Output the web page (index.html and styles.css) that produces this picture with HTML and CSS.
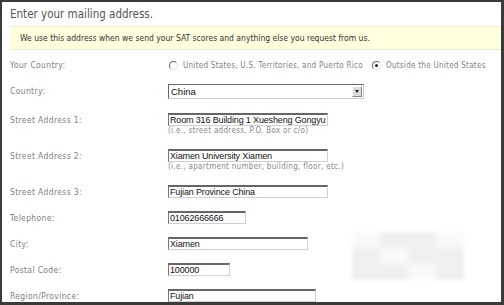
FILE: index.html
```html
<!DOCTYPE html>
<html>

<head>
    <title>Mailing Address</title>
    <link rel="stylesheet" href="styles.css">
</head>

<body>
    <div class="panel">
        <div class="title">Enter your mailing address.</div>
        <div class="notice">We use this address when we send your SAT scores and anything else you request from us.</div>

        <div class="form">
            <div class="row row-radio">
                <div class="label">Your Country:</div>
                <div class="field radios">
                    <span class="radio"></span>
                    <span class="radio-text">United States, U.S. Territories, and Puerto Rico</span>
                    <span class="radio checked"></span>
                    <span class="radio-text">Outside the United States</span>
                </div>
            </div>
            <div class="row row-select">
                <div class="label">Country:</div>
                <div class="field">
                    <div class="select">
                        <span class="select-value">China</span>
                        <span class="select-btn"></span>
                    </div>
                </div>
            </div>
            <div class="row">
                <div class="label">Street Address 1:</div>
                <div class="field">
                    <div class="input w160">Room 316 Building 1 Xuesheng Gongyu</div>
                    <div class="hint">(i.e., street address, P.O. Box or c/o)</div>
                </div>
            </div>
            <div class="row">
                <div class="label">Street Address 2:</div>
                <div class="field">
                    <div class="input w160">Xiamen University Xiamen</div>
                    <div class="hint">(i.e., apartment number, building, floor, etc.)</div>
                </div>
            </div>
            <div class="row">
                <div class="label">Street Address 3:</div>
                <div class="field">
                    <div class="input w160">Fujian Province China</div>
                </div>
            </div>
            <div class="row">
                <div class="label">Telephone:</div>
                <div class="field">
                    <div class="input w78">01062666666</div>
                </div>
            </div>
            <div class="row">
                <div class="label">City:</div>
                <div class="field">
                    <div class="input w140">Xiamen</div>
                </div>
            </div>
            <div class="row">
                <div class="label">Postal Code:</div>
                <div class="field">
                    <div class="input w62">100000</div>
                </div>
            </div>
            <div class="row">
                <div class="label">Region/Province:</div>
                <div class="field">
                    <div class="input w148">Fujian</div>
                </div>
            </div>
        </div>

        <div class="blur-mark">
            <span></span><span></span><span></span><span></span>
            <span></span><span></span><span></span><span></span>
            <span></span><span></span><span></span><span></span>
        </div>
    </div>
</body>

</html>
```

FILE: styles.css
```css
body {
    margin: 0;
    padding: 2px 3px 3px 2px;
    background-color: #3b3b3b;
    font-family: "DejaVu Sans Condensed", "DejaVu Sans", sans-serif;
    height: 305px;
    box-sizing: border-box;
}

.panel {
    position: relative;
    background-color: white;
    height: 300px;
    overflow: hidden;
    padding-left: 8px;
}

.title {
    font-size: 11.5px;
    line-height: 14px;
    color: #555;
    padding-top: 5px;
    box-sizing: border-box;
    height: 24px;
}

.notice {
    background-color: #ffffe0;
    border-top: 1px solid #f0ecc8;
    border-bottom: 1px solid #f0ecc8;
    height: 22px;
    line-height: 22px;
    padding-left: 10px;
    font-size: 8.5px;
    color: #333;
    white-space: nowrap;
}

.form {
    padding-top: 9px;
}

.row {
    display: grid;
    grid-template-columns: 158px 1fr;
    align-items: start;
    padding-bottom: 13px;
}

.label {
    font-size: 8.5px;
    line-height: 10px;
    color: #808080;
    padding-top: 2px;
    letter-spacing: 0.35px;
    white-space: nowrap;
}

.row-radio {
    height: 12px;
    padding-bottom: 13px;
}

.row-radio .label {
    padding-top: 1px;
}

.radios {
    display: flex;
    align-items: center;
    height: 12px;
    font-size: 8px;
    color: #808080;
    padding-left: 1px;
    white-space: nowrap;
}

.radio {
    flex-shrink: 0;
    width: 7px;
    height: 7px;
    border-radius: 50%;
    border: 1px solid;
    border-color: #666 #e4e4e4 #e4e4e4 #666;
    margin-right: 5px;
    position: relative;
}

.radio.checked::after {
    content: "";
    position: absolute;
    left: 2px;
    top: 2px;
    width: 3px;
    height: 3px;
    border-radius: 50%;
    background-color: #222;
}

.radio-text {
    margin-right: 9px;
    letter-spacing: 0.27px;
}

.row-select {
    padding-bottom: 14px;
}

.select {
    width: 196px;
    height: 15px;
    box-sizing: border-box;
    border: 1px solid;
    border-color: #666 #ccc #ccc #666;
    display: flex;
    align-items: center;
    justify-content: space-between;
    font-family: "Liberation Sans", Arial, sans-serif;
    font-size: 9.5px;
    color: #111;
    padding-left: 2px;
}

.select-btn {
    width: 10px;
    height: 11px;
    margin-right: 1px;
    background-color: #ddd;
    border: 1px solid;
    border-color: #fff #888 #888 #fff;
    box-sizing: border-box;
    position: relative;
}

.select-btn::after {
    content: "";
    position: absolute;
    left: 2px;
    top: 3px;
    border-left: 2px solid transparent;
    border-right: 2px solid transparent;
    border-top: 3px solid #222;
}

.input {
    height: 13px;
    line-height: 10px;
    box-sizing: border-box;
    border: 1px solid;
    border-top-width: 2px;
    border-color: #666 #d0d0d0 #d0d0d0 #777;
    font-family: "Liberation Sans", Arial, sans-serif;
    font-size: 9px;
    letter-spacing: -0.15px;
    color: #111;
    padding-left: 1px;
    white-space: nowrap;
    overflow: hidden;
}

.w160 { width: 160px; }
.w148 { width: 148px; }
.w140 { width: 140px; }
.w78 { width: 78px; }
.w62 { width: 62px; }

.hint {
    font-size: 8px;
    color: #888;
    height: 10px;
    line-height: 10px;
    margin-top: 0;
    letter-spacing: 0.3px;
    white-space: nowrap;
}

.blur-mark {
    position: absolute;
    left: 350px;
    top: 230px;
    width: 112px;
    display: grid;
    grid-template-columns: repeat(4, 28px);
    grid-auto-rows: 16px;
    filter: blur(2px);
    opacity: 0.3;
}

.blur-mark span {
    background-color: #ccc;
}

.blur-mark span:nth-child(1),
.blur-mark span:nth-child(4),
.blur-mark span:nth-child(6),
.blur-mark span:nth-child(11) {
    background-color: #eee;
}
```
